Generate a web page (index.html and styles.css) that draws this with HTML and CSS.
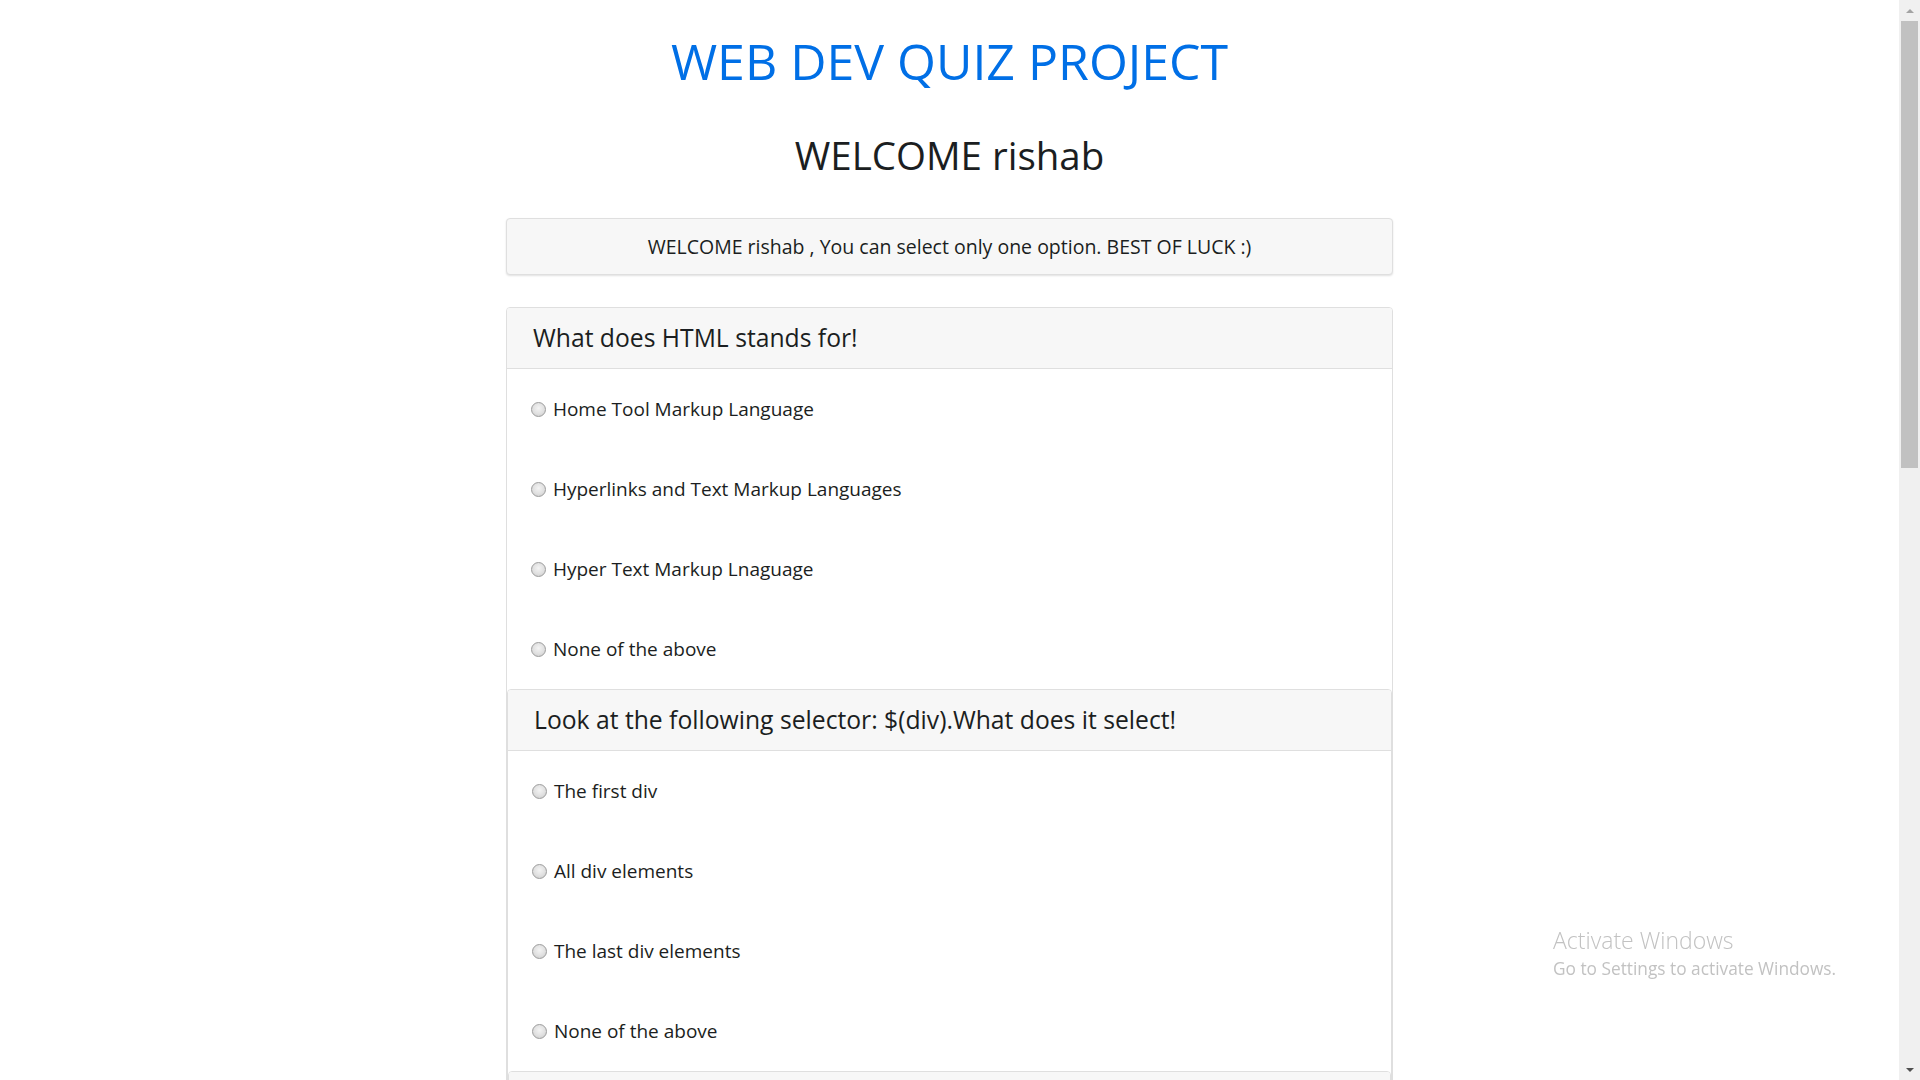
FILE: index.html
```html
<!DOCTYPE html>
<html lang="en">
<head>
<meta charset="utf-8">
<title>Web Dev Quiz Project</title>
<link rel="stylesheet" href="styles.css">
</head>
<body>
<div class="viewport">
  <main class="page">
    <div class="container">
      <h1 class="title">WEB DEV QUIZ PROJECT</h1>
      <h2 class="welcome">WELCOME rishab</h2>
      <div class="notice">WELCOME rishab , You can select only one option. BEST OF LUCK :)</div>

      <div class="card">
        <div class="card-header">What does HTML stands for!</div>
        <div class="card-body">
          <label class="option"><input type="radio" name="q1"> Home Tool Markup Language</label>
          <label class="option"><input type="radio" name="q1"> Hyperlinks and Text Markup Languages</label>
          <label class="option"><input type="radio" name="q1"> Hyper Text Markup Lnaguage</label>
          <label class="option"><input type="radio" name="q1"> None of the above</label>
        </div>
        <div class="card">
          <div class="card-header">Look at the following selector: $(div).What does it select!</div>
          <div class="card-body">
            <label class="option"><input type="radio" name="q2"> The first div</label>
            <label class="option"><input type="radio" name="q2"> All div elements</label>
            <label class="option"><input type="radio" name="q2"> The last div elements</label>
            <label class="option"><input type="radio" name="q2"> None of the above</label>
          </div>
          <div class="card">
            <div class="card-header card-header-empty"></div>
          </div>
        </div>
      </div>
    </div>
  </main>
  <div class="scrollbar">
    <div class="arrow arrow-up"></div>
    <div class="track"><div class="thumb"></div></div>
    <div class="arrow arrow-down"></div>
  </div>
</div>
<div class="activate">
  <div class="activate-title">Activate Windows</div>
  <div class="activate-sub">Go to Settings to activate Windows.</div>
</div>
</body>
</html>
```

FILE: styles.css
```css
html, body {
  margin: 0;
  padding: 0;
  height: 100%;
  overflow: hidden;
  background: #fff;
}

body {
  font-family: "Open Sans", "Noto Sans", sans-serif;
  color: #1b1e21;
}

.viewport {
  display: flex;
  height: 100vh;
}

.page {
  flex: 1;
  overflow: hidden;
}

.container {
  width: 887px;
  margin: 0 auto;
}

.title {
  margin: 30px 0 0;
  font-size: 50px;
  line-height: 62px;
  font-weight: 500;
  color: #006fe6;
  text-align: center;
}

.welcome {
  margin: 39px 0 0;
  font-size: 38.5px;
  line-height: 48px;
  font-weight: 500;
  text-align: center;
}

.notice {
  margin-top: 39px;
  background: #f7f7f7;
  border: 1px solid #dfdfdf;
  border-radius: 4px;
  box-shadow: 0 1px 2px rgba(0, 0, 0, 0.12);
  padding: 13px 20px 12px;
  font-size: 19.5px;
  line-height: 30px;
  font-weight: 500;
  text-align: center;
}

.container > .card {
  margin-top: 32px;
}

.card {
  border: 1px solid #dfdfdf;
  border-radius: 4px;
  background: #fff;
}

.card-header {
  background: #f7f7f7;
  border-bottom: 1px solid #dfdfdf;
  padding: 12px 25px 12px 26px;
  font-size: 24.7px;
  line-height: 36px;
  font-weight: 500;
  border-radius: 3px 3px 0 0;
}

.card-header-empty {
  height: 36px;
}

.card-body {
  padding: 0 20px;
}

.option {
  display: flex;
  align-items: center;
  height: 80px;
  font-size: 19px;
  line-height: 28px;
  white-space: pre;
}

.option input {
  appearance: none;
  -webkit-appearance: none;
  width: 15px;
  height: 15px;
  margin: 0 2px 0 4px;
  border: 1px solid #9c9c9c;
  border-radius: 50%;
  background: radial-gradient(circle at 50% 40%, #f4f4f4 0%, #e0e0e0 55%, #c8c8c8 100%);
  box-sizing: border-box;
  flex: none;
}

.scrollbar {
  width: 21px;
  background: #f0f0f0;
  display: flex;
  flex-direction: column;
  align-items: center;
}

.arrow {
  height: 21px;
  width: 17px;
  display: flex;
  align-items: center;
  justify-content: center;
  flex: none;
}

.arrow-up::before {
  content: "";
  border-left: 4px solid transparent;
  border-right: 4px solid transparent;
  border-bottom: 4px solid #a3a3a3;
}

.arrow-down::before {
  content: "";
  border-left: 4px solid transparent;
  border-right: 4px solid transparent;
  border-top: 4px solid #505050;
}

.track {
  flex: 1;
  width: 17px;
}

.thumb {
  height: 447px;
  background: #c1c1c1;
}

.activate {
  position: fixed;
  left: 1553px;
  top: 924px;
  color: #c2c2c2;
  font-family: "Open Sans", sans-serif;
}

.activate-title {
  font-size: 23px;
  line-height: 32px;
  font-weight: 300;
}

.activate-sub {
  font-size: 17.3px;
  line-height: 22px;
  margin-top: 2px;
}
```
